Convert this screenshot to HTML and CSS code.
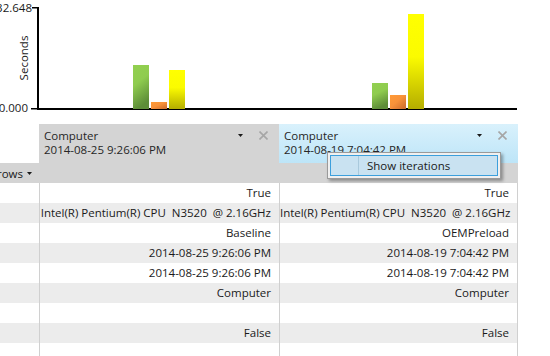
FILE: index.html
```html
<!DOCTYPE html>
<html lang="en">
<head>
  <meta charset="UTF-8">
  <title>Run comparison</title>
  <link rel="stylesheet" href="styles.css">
</head>
<body>

  <div class="chart">
    <svg width="550" height="124" viewBox="0 0 550 124">
      <defs>
        <linearGradient id="gGreen" x1="0" y1="0" x2="0.3" y2="1">
          <stop offset="0" stop-color="#92d050"/>
          <stop offset="0.45" stop-color="#8fcc4f"/>
          <stop offset="1" stop-color="#5d8d38"/>
        </linearGradient>
        <linearGradient id="gOrange" x1="0" y1="0" x2="1" y2="1">
          <stop offset="0" stop-color="#ff9a36"/>
          <stop offset="0.45" stop-color="#f8923a"/>
          <stop offset="1" stop-color="#c96a2c"/>
        </linearGradient>
        <linearGradient id="gYellow" x1="0" y1="0" x2="0" y2="1">
          <stop offset="0" stop-color="#ffff00"/>
          <stop offset="0.45" stop-color="#fbfb00"/>
          <stop offset="1" stop-color="#b4ad00"/>
        </linearGradient>
      </defs>
      <rect x="37" y="7" width="2" height="103" fill="#000"/>
      <rect x="32" y="7" width="6" height="1.5" fill="#000"/>
      <rect x="31" y="108" width="7" height="1.5" fill="#000"/>
      <rect x="37" y="108" width="480" height="2" fill="#000"/>
      <text class="ax" x="32" y="12" text-anchor="end">32.648</text>
      <text class="ax" x="28" y="112" text-anchor="end">0.000</text>
      <text class="ax" transform="translate(28 58) rotate(-90)" text-anchor="middle">Seconds</text>

      <rect x="133" y="65" width="16" height="44" fill="url(#gGreen)"/>
      <rect x="151" y="102" width="16" height="7" fill="url(#gOrange)"/>
      <rect x="169" y="70" width="16" height="39" fill="url(#gYellow)"/>

      <rect x="372" y="83" width="16" height="26" fill="url(#gGreen)"/>
      <rect x="390" y="95" width="16" height="14" fill="url(#gOrange)"/>
      <rect x="408" y="14" width="16" height="95" fill="url(#gYellow)"/>
    </svg>
  </div>

  <div class="grid">
    <div class="head">
      <div class="hblank"></div>
      <div class="hcell">
        <div class="htext"><div>Computer</div><div>2014-08-25 9:26:06 PM</div></div>
        <div class="hbtns">
          <svg class="drop" width="5" height="3" viewBox="0 0 5 3"><path d="M0 0H5L2.5 3Z" fill="#1a1a1a"/></svg>
          <svg class="close" width="9" height="9" viewBox="0 0 9 9"><path d="M0.5 0.5L8.5 8.5M8.5 0.5L0.5 8.5" stroke="#a6a6a6" stroke-width="1.6"/></svg>
        </div>
      </div>
      <div class="hcell sel">
        <div class="htext"><div>Computer</div><div>2014-08-19 7:04:42 PM</div></div>
        <div class="hbtns">
          <svg class="drop" width="5" height="3" viewBox="0 0 5 3"><path d="M0 0H5L2.5 3Z" fill="#1a1a1a"/></svg>
          <svg class="close" width="9" height="9" viewBox="0 0 9 9"><path d="M0.5 0.5L8.5 8.5M8.5 0.5L0.5 8.5" stroke="#a6a6a6" stroke-width="1.6"/></svg>
        </div>
      </div>
    </div>

    <div class="band">
      <div class="toggle"><span>Hide rows</span><svg width="5" height="3" viewBox="0 0 5 3"><path d="M0 0H5L2.5 3Z" fill="#1a1a1a"/></svg></div>
    </div>

    <div class="row"><div class="k"></div><div class="v">True</div><div class="v last">True</div></div>
    <div class="row alt"><div class="k"></div><div class="v">Intel(R) Pentium(R) CPU&nbsp; N3520&nbsp; @ 2.16GHz</div><div class="v last">Intel(R) Pentium(R) CPU&nbsp; N3520&nbsp; @ 2.16GHz</div></div>
    <div class="row"><div class="k"></div><div class="v">Baseline</div><div class="v last">OEMPreload</div></div>
    <div class="row alt"><div class="k"></div><div class="v">2014-08-25 9:26:06 PM</div><div class="v last">2014-08-19 7:04:42 PM</div></div>
    <div class="row"><div class="k"></div><div class="v">2014-08-25 9:26:06 PM</div><div class="v last">2014-08-19 7:04:42 PM</div></div>
    <div class="row alt"><div class="k"></div><div class="v">Computer</div><div class="v last">Computer</div></div>
    <div class="row"><div class="k"></div><div class="v"></div><div class="v last"></div></div>
    <div class="row alt"><div class="k"></div><div class="v">False</div><div class="v last">False</div></div>
    <div class="row"><div class="k"></div><div class="v"></div><div class="v last"></div></div>

    <div class="menu">
      <div class="mitem"><span class="micon"></span><span class="mlabel">Show iterations</span></div>
    </div>
  </div>

</body>
</html>
```

FILE: styles.css
```css
body {
  margin: 0;
  font-family: "Segoe UI", "Open Sans", "Noto Sans", sans-serif;
  font-size: 11.5px;
  color: #1a1a1a;
  background: #fff;
  overflow: hidden;
}
.chart {
  height: 124px;
}
.chart svg {
  display: block;
}
.ax {
  font-family: "Segoe UI", "Open Sans", sans-serif;
  font-size: 11.5px;
  fill: #1a1a1a;
}

.grid {
  position: relative;
  width: 518px;
}
.head {
  display: grid;
  grid-template-columns: 39px 240px 239px;
  height: 39px;
}
.hcell {
  display: flex;
  background: #d4d4d4;
  padding: 5px 0 0 5px;
  line-height: 14px;
  color: #262626;
}
.hcell.sel {
  background: linear-gradient(#d9f1fc, #bde5f8);
}
.htext {
  flex: 1;
}
.hbtns {
  display: flex;
  align-items: flex-start;
  gap: 16px;
  padding-right: 11px;
}
.drop {
  margin-top: 5px;
}
.close {
  margin-top: 2px;
}

.band {
  height: 20px;
  background: #d4d4d4;
}
.toggle {
  width: 33px;
  height: 20px;
  display: flex;
  align-items: center;
  justify-content: flex-end;
  gap: 4px;
  overflow: hidden;
  white-space: nowrap;
}
.toggle svg {
  flex: none;
  margin-right: 1px;
}

.row {
  display: grid;
  grid-template-columns: 39px 240px 239px;
  height: 20px;
  line-height: 20px;
}
.row.alt {
  background: #ececec;
}
.v {
  border-left: 1px solid #d0d0d0;
  text-align: right;
  padding-right: 8px;
  white-space: nowrap;
  overflow: hidden;
}
.v.last {
  border-right: 1px solid #d0d0d0;
}

.menu {
  position: absolute;
  left: 327px;
  top: 28px;
  width: 168px;
  height: 21px;
  background: #f0f0f0;
  border: 1px solid #9a9a9a;
  box-shadow: 2px 2px 3px rgba(0, 0, 0, 0.35);
  padding: 2px;
}
.mitem {
  display: flex;
  height: 19px;
  border: 1px solid #3c9fdc;
  background: #c9e2f1;
  align-items: center;
}
.micon {
  width: 27px;
  height: 100%;
  border-right: 1px solid #a9c9dc;
}
.mlabel {
  padding-left: 8px;
  color: #1a1a1a;
}
```
